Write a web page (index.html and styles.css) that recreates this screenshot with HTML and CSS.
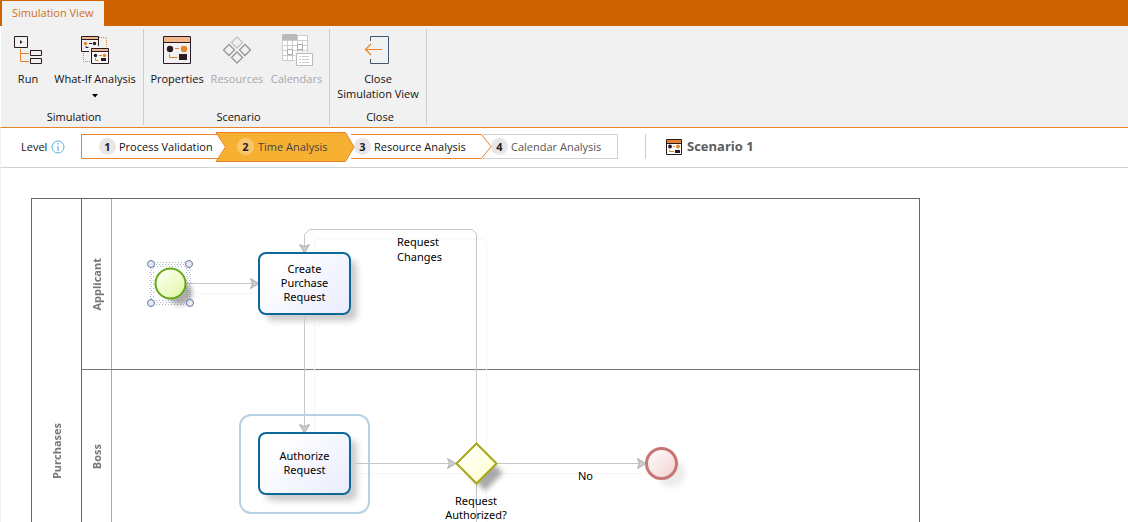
FILE: index.html
```html
<!DOCTYPE html>
<html lang="en">
<head>
<meta charset="utf-8">
<meta name="viewport" content="width=device-width, initial-scale=1">
<title>Simulation View</title>
<link rel="stylesheet" href="styles.css">
</head>
<body>
<div class="app">
  <nav class="tabs"><button class="tab" type="button">Simulation View</button></nav>

  <header class="ribbon">
    <section class="group" aria-label="Simulation">
      <div class="tools">
        <button class="tool tool-run" type="button">
          <svg class="icon" viewBox="0 0 32 32" fill="none">
            <path d="M2.5 4.500h13v11h-13zM18.500 18.500h11v5h-11zM18.500 26.500h11v5h-11z" stroke="#2b1a22"/>
            <path d="M8 8v4l2.500-2z" fill="#2b1a22"/>
            <path d="M8.500 17v12.500h8.500M8.500 21.500h8.500" stroke="#e8832a"/>
          </svg>
          <span>Run</span>
        </button>
        <button class="tool tool-whatif" type="button">
          <svg class="icon" viewBox="0 0 32 32" fill="none">
            <path d="M20 5.500h7.500v9M4.500 21v8.500h8" stroke="#e8832a" stroke-dasharray="1 1"/>
            <path d="M10 19.500h-7.500v-15h17v9.500" stroke="#2b1a22"/>
            <path d="M3 5h16v2h-16z" fill="#efb98d"/>
            <path d="M2 7.500h18M7 14v1.500h2.500" stroke="#2b1a22"/>
            <circle cx="6.500" cy="11.500" r="1.700" fill="#e8832a"/><path d="M10 11.500h3" stroke="#2b1a22"/><circle cx="15.500" cy="11.500" r="1.700" fill="#2b1a22"/>
            <path d="M12.500 16.500h17v15h-17z" fill="#f7f7f7" stroke="#2b1a22"/>
            <path d="M13 17h16v2h-16z" fill="#efb98d"/><path d="M12 19.500h18" stroke="#2b1a22"/>
            <circle cx="16.500" cy="23.500" r="1.700" fill="#2b1a22"/><path d="M20 23.500h3M16.500 26v2.500h3" stroke="#e8832a"/><circle cx="25.500" cy="23.500" r="1.700" fill="#e8832a"/>
            <path d="M22 26h5v3h-5z" fill="#2b1a22"/>
          </svg>
          <span>What-If Analysis</span>
          <svg class="caret" viewBox="0 0 6 4"><path d="M0 0h6L3 3.500z"/></svg>
        </button>
      </div>
      <h2 class="group-name">Simulation</h2>
    </section>

    <section class="group" aria-label="Scenario">
      <div class="tools">
        <button class="tool tool-prop" type="button">
          <svg class="icon" viewBox="0 0 32 32" fill="none">
            <path d="M2.500 4.500h27v27h-27z" stroke="#2b1a22"/>
            <path d="M3 5h26v5h-26z" fill="#efb98d"/><path d="M2 10.500h28" stroke="#2b1a22"/>
            <circle cx="9" cy="17" r="3.200" fill="#2b1a22"/><circle cx="23" cy="17" r="3.200" fill="#e8832a"/>
            <path d="M14 16.500h4M8.500 22v3.500h8" stroke="#e8832a"/><path d="M18 22h8v6h-8z" fill="#2b1a22"/>
          </svg>
          <span>Properties</span>
        </button>
        <button class="tool tool-res" type="button" disabled>
          <svg class="icon" viewBox="0 0 32 32" fill="none" stroke="#999" stroke-width="1.400">
            <path d="M16 5l5.500 5.500L16 16l-5.500-5.500z" stroke="#c4c4c4"/>
            <path d="M8 12.500l5.500 5.500L8 23.500 2.500 18zM24 12.500l5.500 5.500-5.500 5.500-5.500-5.500zM16 20l5.500 5.500L16 31l-5.500-5.500z"/>
          </svg>
          <span>Resources</span>
        </button>
        <button class="tool tool-cal" type="button" disabled>
          <svg class="icon" viewBox="0 0 32 32" fill="none" stroke="#ccc">
            <path d="M1.500 3.500h25v25h-25z" fill="#fff"/>
            <path d="M1 8V4q0-2 2-2h13v6z" fill="#b9b9b9" stroke="none"/>
            <path d="M1 13.500h25M1 18.500h25M1 23.500h25M6.500 8v21M11.500 8v21M16.500 4v25M21.500 8v21M1 8.500h25"/>
            <path d="M6.500 17.500h5v5h-5zM16.500 12.500h5v5h-5z" fill="#fff" stroke="#aaa"/>
            <path d="M14 20h18v13H14z" fill="#f0f0f0" stroke="none"/>
            <path d="M15.500 21.500h16v12h-16z" fill="#fff" stroke="#bbb"/>
            <path d="M18 24.500h2M21 24.500h7M18 27.500h2M21 27.500h7M18 30.500h2M21 30.500h7"/>
          </svg>
          <span>Calendars</span>
        </button>
      </div>
      <h2 class="group-name">Scenario</h2>
    </section>

    <section class="group" aria-label="Close">
      <div class="tools">
        <button class="tool tool-close" type="button">
          <svg class="icon" viewBox="0 0 32 32" fill="none">
            <path d="M8.500 9V4.500h18v27h-18V27" stroke="#41566f"/>
            <path d="M20 17.500H4.500M9 12l-5.500 5.500L9 23" stroke="#e8832a" stroke-width="1.200"/>
          </svg>
          <span>Close<br>Simulation View</span>
        </button>
      </div>
      <h2 class="group-name">Close</h2>
    </section>
  </header>

  <div class="levelbar">
    <span class="level">Level</span>
    <svg class="info" viewBox="0 0 14 14" fill="none" stroke="#55b3e0"><circle cx="7" cy="7" r="6"/><path d="M7 6v5M7 3v1.500" stroke-width="1.200"/></svg>
    <div class="steps">
      <button class="step step-first" type="button"><b>1</b><span>Process Validation</span></button>
      <button class="step step-current" type="button" aria-current="step">
        <svg class="chevron" viewBox="0 0 140 30"><path d="M1 .5h129.500l8.500 14.500-8.500 14.500H1L10.500 15z" fill="#f6b133" stroke="#e5832c"/></svg>
        <b>2</b><span>Time Analysis</span>
      </button>
      <button class="step step-next" type="button">
        <svg class="chevron" viewBox="0 0 141 25"><path d="M0 .5h130.500l9.500 12-9.500 12H0" fill="#fff" stroke="#e5832c"/></svg>
        <b>3</b><span>Resource Analysis</span>
      </button>
      <button class="step step-last" type="button"><b>4</b><span>Calendar Analysis</span></button>
    </div>
    <div class="scenario">
      <svg class="scenario-icon" viewBox="0 0 16 16" fill="none">
        <path d="M.5.500h15v15H.5z" fill="#fff" stroke="#2b1a22"/>
        <path d="M1 1h14v3H1z" fill="#e5832c"/><path d="M0 4.500h16" stroke="#2b1a22"/>
        <circle cx="4" cy="7.500" r="1.900" fill="#2b1a22"/><circle cx="12" cy="7.500" r="1.900" fill="#e5832c"/>
        <path d="M7 7.500h2M3.500 11v1.500H8" stroke="#e5832c"/><path d="M9 11h5v3H9z" fill="#2b1a22"/>
      </svg>
      <h1>Scenario 1</h1>
    </div>
  </div>

  <main class="canvas">
    <div class="pool">
      <div class="pool-name"><span>Purchases</span></div>
      <div class="lane lane-a"><div class="lane-name"><span>Applicant</span></div></div>
      <div class="lane lane-b"><div class="lane-name"><span>Boss</span></div></div>
      <div class="lane"></div>
    </div>

    <svg class="drawing" viewBox="0 168 1128 354" fill="none">
      <defs>
        <linearGradient id="green" x1="0" y1="0" x2="1" y2="1"><stop stop-color="#fff"/><stop offset="1" stop-color="#dff89c"/></linearGradient>
        <linearGradient id="yellow" x1="0" y1="0" x2="1" y2="1"><stop stop-color="#fff"/><stop offset="1" stop-color="#fcffcb"/></linearGradient>
        <linearGradient id="red" x1="0" y1="0" x2="1" y2="1"><stop stop-color="#fff"/><stop offset="1" stop-color="#f2d0d0"/></linearGradient>
        <pattern id="dots" width="3" height="4" patternUnits="userSpaceOnUse"><path d="M0 0h1v1H0zM1 2h1v1H1z" fill="#a9b5cc"/></pattern>
        <filter id="soft" x="-50%" y="-50%" width="200%" height="200%"><feGaussianBlur stdDeviation="2.500"/></filter>
        <marker id="arrow" viewBox="0 0 10 12" markerWidth="10" markerHeight="12" refX="9" refY="6" orient="auto" markerUnits="userSpaceOnUse"><path d="M.5 1L9 6 .5 11l2-5z" fill="#ccc" stroke="#b0b0b0"/></marker>
      </defs>
      <g stroke="#f5f5f5">
        <path d="M197 293.500h72M314.500 263v-18q0-6 6-6h160q6 0 6 6v277M314.500 323v110M360 473.500h290"/>
      </g>
      <g stroke="#c6c6c6">
        <path d="M187 283.500h72" marker-end="url(#arrow)"/>
        <path d="M476.500 443V234l-4-4.500h-163l-5 5V253" marker-end="url(#arrow)"/>
        <path d="M304.500 315V433" marker-end="url(#arrow)"/>
        <path d="M351 463.500h105" marker-end="url(#arrow)"/>
        <path d="M498 463.500h148" marker-end="url(#arrow)"/>
      </g>
      <path d="M476.500 484v38" stroke="#c6c6c6"/>

      <path d="M149 261h43v45h-43zM154 267v32h32v-32z" fill="url(#dots)" fill-rule="evenodd"/>
      <circle cx="180" cy="293" r="12" fill="#777" opacity=".6" filter="url(#soft)"/>
      <circle cx="170.500" cy="283.500" r="15" fill="url(#green)" stroke="#62a818" stroke-width="2"/>
      <g fill="#e6e9f0" stroke="#6678a5"><circle cx="151" cy="264" r="3.500"/><circle cx="189" cy="264" r="3.500"/><circle cx="151" cy="303" r="3.500"/><circle cx="190" cy="303" r="3.500"/></g>

      <path d="M485 455l18 18-18 18-18-18z" fill="#666" opacity=".55" filter="url(#soft)"/>
      <path d="M476.500 443.500l20 20-20 20-20-20z" fill="url(#yellow)" stroke="#a7a71a" stroke-width="2"/>
      <circle cx="671" cy="473" r="14" fill="#999" opacity=".18" filter="url(#soft)"/>
      <circle cx="661.500" cy="463.500" r="15" fill="url(#red)" stroke="#c97575" stroke-width="3"/>
    </svg>

    <div class="halo"></div>
    <div class="task task-create">Create<br>Purchase<br>Request</div>
    <div class="task task-authorize">Authorize<br>Request</div>
    <p class="label label-changes">Request<br>Changes</p>
    <p class="label label-no">No</p>
    <p class="label label-authorized">Request<br>Authorized?</p>
  </main>
</div>
</body>
</html>
```
FILE: styles.css
```css
* { box-sizing: border-box; }
body { margin: 0; background: #fff; color: #111; font: 11px/15px "Open Sans", "Noto Sans", sans-serif; }
button { margin: 0; padding: 0; border: 0; background: none; color: inherit; font: inherit; }
h1, h2, p { margin: 0; font: inherit; }
.app { display: flex; flex-direction: column; height: 100vh; overflow: hidden; }

.tabs { display: flex; flex: none; height: 26px; padding: 1px 0 0 2px; background: #cf6200; }
.tab { padding: 0 11px 2px 10px; width: 102px; background: #f1f1f1; color: #d0701c; white-space: nowrap; }

.ribbon { display: flex; flex: none; height: 102px; padding-top: 3px; background: #f1f1f1; border-left: 1px solid #fff; border-bottom: 1px solid #e5832c; }
.group { display: flex; flex-direction: column; justify-content: space-between; height: 96px; padding: 3px 0 1px; border-right: 1px solid #ccc; }
.tools { display: flex; }
.tool { display: flex; flex-direction: column; align-items: center; white-space: nowrap; }
.tool:disabled { color: #a8a8a8; }
.icon { width: 32px; height: 32px; margin-bottom: 7px; overflow: visible; }
.caret { width: 6px; height: 4px; margin-top: 8px; }
.group-name { padding-left: 4px; text-align: center; }
.tool-run { width: 54px; }
.tool-whatif { width: 80px; margin-right: 8px; }
.tool-prop { width: 66px; }
.tool-res { width: 54px; }
.tool-cal { width: 65px; }
.tool-close { width: 96px; }

.levelbar { display: flex; flex: none; align-items: center; height: 40px; padding: 0 0 2px 20px; border-bottom: 1px solid #d2d2d2; border-left: 1px solid #f1f1f1; }
.info { width: 14px; height: 14px; margin: 0 16px 0 4px; }
.level { width: 26px; }
.steps { display: flex; align-items: center; height: 30px; }
.step { position: relative; display: flex; align-items: center; flex: none; height: 25px; white-space: nowrap; }
.step b { position: relative; width: 17px; height: 17px; margin-right: 3px; border-radius: 50%; background: #e8e6e6; line-height: 17px; text-align: center; color: #2b1a22; }
.step span { position: relative; }
.chevron { position: absolute; left: 0; top: 0; width: 100%; height: 100%; }
.step-first { width: 145px; padding-left: 17px; border: 1px solid #e5832c; border-right: 0; }
.step-current { z-index: 2; width: 140px; height: 30px; margin-left: -11px; padding-left: 22px; color: #444; }
.step-current b { margin-right: 4px; background: #fac66c; }
.step-next { z-index: 1; width: 141px; margin-left: -4px; padding-left: 3px; }
.step-last { width: 135px; margin-left: -9px; padding-left: 8px; border: 1px solid #d0d0d0; border-left: 0; color: #555; }
.scenario { display: flex; align-items: center; gap: 5px; height: 25px; margin-left: 27px; padding-left: 20px; border-left: 1px solid #ccc; }
.scenario-icon { width: 16px; height: 16px; }
.scenario h1 { color: #5c5c5c; font-size: 13px; font-weight: 700; white-space: nowrap; }

.canvas { position: relative; flex: 1; min-height: 0; overflow: hidden; border-left: 1px solid #f1f1f1; font-family: "Noto Sans", "Open Sans", sans-serif; font-size: 11px; line-height: 14px; }
.pool { display: grid; grid-template: 171px 174px 160px / 50px 1fr; width: 889px; margin: 30px 0 0 30px; border: 1px solid #666; }
.pool-name { grid-row: 1 / 4; display: flex; align-items: center; justify-content: center; border-right: 1px solid #666; }
.pool-name span, .lane-name span { writing-mode: vertical-rl; transform: rotate(180deg); color: #777; font-family: "Open Sans", sans-serif; font-weight: 700; }
.lane { display: flex; border-bottom: 1px solid #777; }
.lane-name { display: flex; align-items: center; justify-content: center; width: 30px; border-right: 1px solid #aaa; }
.drawing { position: absolute; left: -1px; top: 0; width: 1128px; height: 354px; }
.task, .label { position: absolute; text-align: center; color: #000; }
.task { display: flex; align-items: center; justify-content: center; left: 257px; width: 93px; height: 63px; padding-bottom: 2px; border: 2px solid #0c6898; border-radius: 8px; background: linear-gradient(135deg, #fff 20%, #e9ecfd); box-shadow: 7px 7px 6px -1px #ccc; }
.task-create { top: 84px; }
.task-authorize { top: 264px; }
.halo { position: absolute; left: 238px; top: 246px; width: 131px; height: 100px; border: 2px solid #b4d2e2; border-radius: 12px; }
.label { line-height: 15px; white-space: nowrap; }
.label-changes { left: 396px; top: 66px; text-align: left; }
.label-no { left: 577px; top: 300px; }
.label-authorized { left: 439px; top: 326px; width: 72px; line-height: 14px; }
```
